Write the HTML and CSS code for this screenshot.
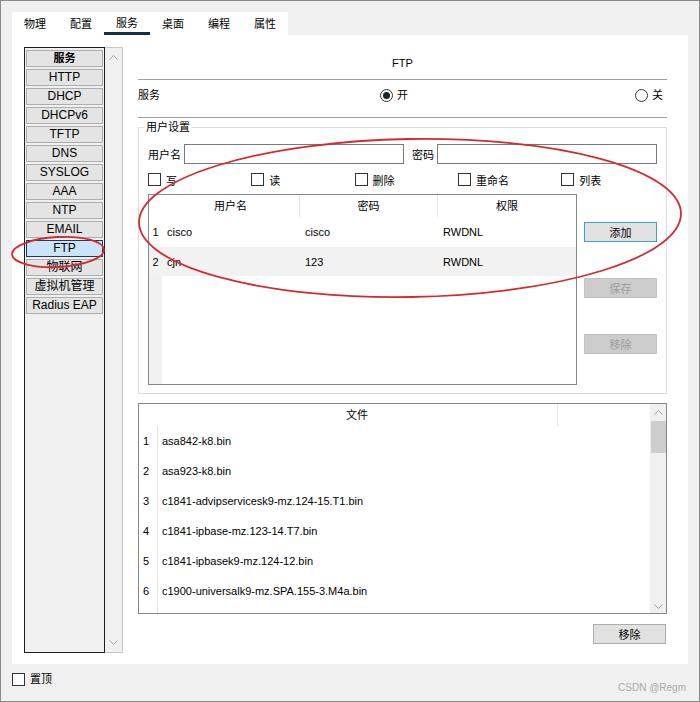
FILE: index.html
```html
<!DOCTYPE html>
<html>
<head>
    <title>FTP</title>
    <link rel="stylesheet" href="styles.css">
</head>
<body>
<div class="window">
    <div class="tabs">
        <div class="tab">物理</div>
        <div class="tab">配置</div>
        <div class="tab active">服务</div>
        <div class="tab">桌面</div>
        <div class="tab">编程</div>
        <div class="tab">属性</div>
    </div>

    <div class="panel">
        <div class="sidebar">
            <div class="svc-list">
                <div class="svc-btn bold">服务</div>
                <div class="svc-btn">HTTP</div>
                <div class="svc-btn">DHCP</div>
                <div class="svc-btn">DHCPv6</div>
                <div class="svc-btn">TFTP</div>
                <div class="svc-btn">DNS</div>
                <div class="svc-btn">SYSLOG</div>
                <div class="svc-btn">AAA</div>
                <div class="svc-btn">NTP</div>
                <div class="svc-btn">EMAIL</div>
                <div class="svc-btn selected">FTP</div>
                <div class="svc-btn">物联网</div>
                <div class="svc-btn">虚拟机管理</div>
                <div class="svc-btn">Radius EAP</div>
            </div>
            <div class="vscroll">
                <svg class="chev" width="9" height="5"><polyline points="0.5,4.5 4.5,0.5 8.5,4.5"/></svg>
                <svg class="chev" width="9" height="5"><polyline points="0.5,0.5 4.5,4.5 8.5,0.5"/></svg>
            </div>
        </div>

        <div class="content">
            <div class="title">FTP</div>

            <div class="svc-row">
                <span class="svc-label">服务</span>
                <span class="radio"><span class="dot on"></span>开</span>
                <span class="radio last"><span class="dot"></span>关</span>
            </div>

            <fieldset class="group">
                <legend>用户设置</legend>
                <div class="cred-row">
                    <span>用户名</span>
                    <input class="field" type="text">
                    <span class="pw-label">密码</span>
                    <input class="field" type="text">
                </div>
                <div class="perm-row">
                    <span class="perm"><span class="box"></span>写</span>
                    <span class="perm"><span class="box"></span>读</span>
                    <span class="perm"><span class="box"></span>删除</span>
                    <span class="perm"><span class="box"></span>重命名</span>
                    <span class="perm"><span class="box"></span>列表</span>
                </div>
                <div class="user-area">
                    <div class="user-table">
                        <div class="ut-row ut-head">
                            <div></div>
                            <div class="sep">用户名</div>
                            <div class="sep">密码</div>
                            <div>权限</div>
                        </div>
                        <div class="ut-row">
                            <div class="num">1</div>
                            <div>cisco</div>
                            <div>cisco</div>
                            <div>RWDNL</div>
                        </div>
                        <div class="ut-row alt">
                            <div class="num">2</div>
                            <div>cjn</div>
                            <div>123</div>
                            <div>RWDNL</div>
                        </div>
                    </div>
                    <div class="user-btns">
                        <button class="btn focus">添加</button>
                        <button class="btn" disabled>保存</button>
                        <button class="btn" disabled>移除</button>
                    </div>
                </div>
            </fieldset>

            <div class="file-table">
                <div class="ft-main">
                    <div class="ft-row ft-head">
                        <div></div>
                        <div class="sep">文件</div>
                        <div></div>
                    </div>
                    <div class="ft-row"><div class="num">1</div><div>asa842-k8.bin</div><div></div></div>
                    <div class="ft-row"><div class="num">2</div><div>asa923-k8.bin</div><div></div></div>
                    <div class="ft-row"><div class="num">3</div><div>c1841-advipservicesk9-mz.124-15.T1.bin</div><div></div></div>
                    <div class="ft-row"><div class="num">4</div><div>c1841-ipbase-mz.123-14.T7.bin</div><div></div></div>
                    <div class="ft-row"><div class="num">5</div><div>c1841-ipbasek9-mz.124-12.bin</div><div></div></div>
                    <div class="ft-row"><div class="num">6</div><div>c1900-universalk9-mz.SPA.155-3.M4a.bin</div><div></div></div>
                </div>
                <div class="ft-scroll">
                    <svg class="chev" width="9" height="5"><polyline points="0.5,4.5 4.5,0.5 8.5,4.5"/></svg>
                    <div class="thumb"></div>
                    <svg class="chev down" width="9" height="5"><polyline points="0.5,0.5 4.5,4.5 8.5,0.5"/></svg>
                </div>
            </div>

            <div class="bottom-actions">
                <button class="btn">移除</button>
            </div>
        </div>
    </div>

    <div class="footer">
        <span class="pin"><span class="box"></span>置顶</span>
        <span class="watermark">CSDN @Regm</span>
    </div>

    <!-- hand-drawn annotation marks -->
    <svg class="marks" width="700" height="702">
        <ellipse cx="58" cy="252" rx="46" ry="15" transform="rotate(-3 58 252)"/>
        <ellipse cx="410" cy="218" rx="271" ry="79" transform="rotate(-1 410 218)"/>
    </svg>
</div>
</body>
</html>
```

FILE: styles.css
```css
body {
    margin: 0;
    font-family: "Liberation Sans", "Noto Sans CJK SC", sans-serif;
    font-size: 11px;
    color: #000;
}

.window {
    position: relative;
    width: 700px;
    height: 702px;
    box-sizing: border-box;
    border: 1px solid #8a8a8a;
    background: #f0f0f0;
    padding: 11px 11px 0 11px;
}

.tabs {
    display: flex;
    width: 276px;
    height: 23px;
    background: #fff;
}

.tab {
    width: 46px;
    box-sizing: border-box;
    text-align: center;
    line-height: 24px;
    font-size: 11px;
}

.tab.active {
    border-bottom: 3px solid #172b4d;
    line-height: 22px;
}

.panel {
    display: flex;
    height: 629px;
    background: #fff;
    padding: 11px 0 0 12px;
    box-sizing: border-box;
}

/* service list on the left */
.sidebar {
    display: flex;
    width: 99px;
    height: 606px;
    margin-top: 1px;
}

.svc-list {
    width: 81px;
    box-sizing: border-box;
    border: 1px solid #1e1e1e;
    background: #f0f0f0;
    padding: 2px 1px 1px;
}

.svc-btn {
    height: 17px;
    box-sizing: border-box;
    margin-bottom: 2px;
    border: 1px solid #adadad;
    background: #e4e4e4;
    text-align: center;
    line-height: 15px;
    font-size: 12px;
}

.svc-btn.bold {
    font-weight: bold;
    font-size: 11px;
}

.svc-btn.selected {
    background: #cce4f7;
    border-color: #1c3b5a;
}

.vscroll {
    width: 18px;
    box-sizing: border-box;
    border: 1px solid #c8c8c8;
    border-left: none;
    background: #f0f0f0;
    display: flex;
    flex-direction: column;
    align-items: center;
    justify-content: space-between;
    padding: 7px 0 7px;
}

.chev polyline {
    fill: none;
    stroke: #a2a2a2;
    stroke-width: 1;
}

/* right side */
.content {
    width: 529px;
    margin-left: 15px;
}

.title {
    height: 33px;
    border-bottom: 1px solid #a0a0a0;
    display: flex;
    align-items: center;
    justify-content: center;
    padding-top: 1px;
    box-sizing: content-box;
    height: 32px;
}

.svc-row {
    border-bottom: 1px solid #a0a0a0;
    display: flex;
    align-items: flex-start;
    padding: 9px 4px 0 0;
    line-height: 13px;
    height: 28px;
}

.svc-label {
    width: 242px;
}

.radio {
    display: flex;
    align-items: center;
    gap: 4px;
}

.radio.last {
    margin-left: auto;
}

.dot {
    width: 13px;
    height: 13px;
    box-sizing: border-box;
    border: 1px solid #333;
    border-radius: 50%;
    display: flex;
    align-items: center;
    justify-content: center;
}

.dot.on::after {
    content: "";
    width: 7px;
    height: 7px;
    border-radius: 50%;
    background: #222;
}

.group {
    margin: 2px 0 0;
    padding: 10px 9px 8px;
    border: 1px solid #dcdcdc;
    min-width: 0;
}

.group legend {
    padding: 0 2px;
    margin-left: -4px;
    line-height: 14px;
}

.cred-row {
    display: flex;
    align-items: center;
    gap: 3px;
    height: 20px;
}

.pw-label {
    margin-left: 5px;
}

.field {
    flex: 1;
    min-width: 0;
    height: 20px;
    box-sizing: border-box;
    border: 1px solid #7a7a7a;
    padding: 0 3px;
    font: inherit;
}

.perm-row {
    display: flex;
    margin-top: 9px;
    height: 13px;
}

.perm {
    display: flex;
    align-items: center;
    gap: 5px;
    width: 103.3px;
    flex-shrink: 0;
}

.box {
    width: 13px;
    height: 13px;
    box-sizing: border-box;
    border: 1px solid #333;
    background: #fff;
}

.user-area {
    display: flex;
    gap: 7px;
    margin-top: 8px;
}

.user-table {
    width: 429px;
    height: 191px;
    box-sizing: border-box;
    border: 1px solid #828790;
    background: linear-gradient(to right, #f0f0f0 13px, #fff 13px);
}

.ut-row {
    display: grid;
    grid-template-columns: 13px 138px 138px 1fr;
    height: 30px;
    align-items: center;
    background: #fff;
}

.ut-row > div {
    padding-left: 5px;
}

.ut-row > .num {
    padding-left: 0;
    text-align: center;
}

.ut-row.alt {
    background: #f2f2f2;
    height: 29px;
}

.ut-head {
    height: 22px;
    align-items: stretch;
}

.ut-head > div {
    padding-left: 0;
    text-align: center;
    line-height: 22px;
}

.sep {
    border-right: 1px solid #e5e5e5;
}

.user-btns {
    display: flex;
    flex-direction: column;
    gap: 36px;
    padding-top: 28px;
}

.btn {
    width: 73px;
    height: 20px;
    box-sizing: border-box;
    border: 1px solid #adadad;
    background: #e1e1e1;
    font: inherit;
    color: #000;
    padding: 0;
}

.btn.focus {
    border-color: #3c9fcf;
}

.btn:disabled {
    background: #cccccc;
    border-color: #c4c4c4;
    color: #9c9c9c;
}

.file-table {
    display: flex;
    height: 211px;
    margin-top: 9px;
    box-sizing: border-box;
    border: 1px solid #828790;
    overflow: hidden;
}

.ft-main {
    flex: 1;
    background: linear-gradient(to right, #fff 18px, #e3e3e3 18px, #e3e3e3 19px, #fff 19px);
}

.ft-row {
    display: grid;
    grid-template-columns: 18px 401px 1fr;
    height: 30px;
    align-items: center;
}

.ft-row > div {
    padding-left: 5px;
}

.ft-row > .num {
    padding-left: 4px;
}

.ft-head {
    height: 22px;
    background: #fff;
    align-items: stretch;
}

.ft-head > div {
    padding-left: 0;
    text-align: center;
    line-height: 22px;
}

.ft-scroll {
    width: 16px;
    background: #f0f0f0;
    display: flex;
    flex-direction: column;
    align-items: center;
    padding: 6px 0 4px;
    box-sizing: border-box;
}

.thumb {
    width: 15px;
    height: 32px;
    margin-top: 6px;
    background: #cdcdcd;
}

.chev.down {
    margin-top: auto;
}

.bottom-actions {
    display: flex;
    justify-content: flex-end;
    margin-top: 10px;
    padding-right: 1px;
}

.footer {
    display: flex;
    align-items: flex-start;
    padding: 9px 2px 0 0;
}

.pin {
    display: flex;
    align-items: center;
    gap: 5px;
    line-height: 13px;
}

.watermark {
    margin-left: auto;
    margin-top: 9px;
    color: #aaa;
    font-size: 10px;
}

.marks {
    position: absolute;
    top: -1px;
    left: -1px;
    pointer-events: none;
}

.marks ellipse {
    fill: none;
    stroke: #d42a2f;
    stroke-width: 1.8;
}
```
